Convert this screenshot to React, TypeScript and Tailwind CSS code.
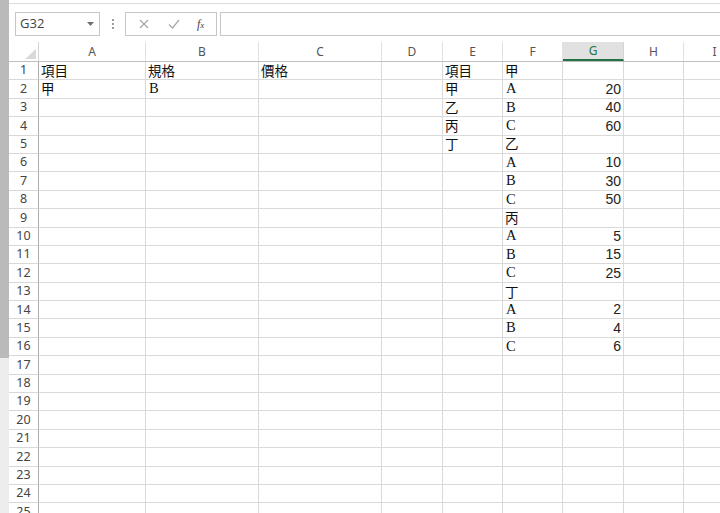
import React from "react";

const cols = [
  { l: "A", w: 107 },
  { l: "B", w: 113 },
  { l: "C", w: 123 },
  { l: "D", w: 61 },
  { l: "E", w: 60 },
  { l: "F", w: 60 },
  { l: "G", w: 61 },
  { l: "H", w: 60 },
  { l: "I", w: 62 },
];

const data: Record<number, Record<string, string>> = {
  1: { A: "項目", B: "規格", C: "價格", E: "項目", F: "甲" },
  2: { A: "甲", B: "B", E: "甲", F: "A", G: "20" },
  3: { E: "乙", F: "B", G: "40" },
  4: { E: "丙", F: "C", G: "60" },
  5: { E: "丁", F: "乙" },
  6: { F: "A", G: "10" },
  7: { F: "B", G: "30" },
  8: { F: "C", G: "50" },
  9: { F: "丙" },
  10: { F: "A", G: "5" },
  11: { F: "B", G: "15" },
  12: { F: "C", G: "25" },
  13: { F: "丁" },
  14: { F: "A", G: "2" },
  15: { F: "B", G: "4" },
  16: { F: "C", G: "6" },
};

const rows = Array.from({ length: 25 }, (_, i) => i + 1);

function CellText({ v }: { v: string }) {
  if (/^\d+$/.test(v)) {
    return (
      <span className="ml-auto pr-[2px] text-[14px] leading-none text-[#222] [font-family:'Liberation_Sans',Arial,sans-serif]">
        {v}
      </span>
    );
  }
  if (/^[A-Z]$/.test(v)) {
    return (
      <span className="pl-[3px] text-[14.5px] leading-none text-[#111] [font-family:'Liberation_Serif','Times_New_Roman',serif]">
        {v}
      </span>
    );
  }
  return (
    <span className="pl-[2px] text-[13.5px] leading-none text-[#111] [font-family:'Noto_Sans_CJK_TC','Noto_Sans_CJK_SC',sans-serif]">
      {v}
    </span>
  );
}

export default function App() {
  return (
    <div className="flex h-[513px] w-[720px] overflow-hidden bg-white [font-family:'Noto_Sans',sans-serif]">
      <div className="flex w-[9px] shrink-0 flex-col">
        <div className="h-[358px] bg-[#bababa]" />
        <div className="flex-1 bg-[#ededed]" />
      </div>
      <div className="flex min-w-0 flex-1 flex-col">
        {/* formula bar */}
        <div className="h-[42px] shrink-0">
          <div className="mt-[3px] h-px bg-[#dcdcdc]" />
          <div className="mt-[8px] flex h-[24px] items-stretch">
            <div className="ml-[6px] flex w-[85px] items-center border border-[#c6c6c6] pl-[4px] pr-[5px]">
              <span className="text-[13px] text-[#444] [font-family:'Open_Sans',sans-serif]">G32</span>
              <svg className="ml-auto" width="7" height="4" viewBox="0 0 7 4">
                <path d="M0 0h7L3.5 4z" fill="#707070" />
              </svg>
            </div>
            <div className="flex w-[25px] flex-col items-center justify-center gap-[2px]">
              <div className="h-[2px] w-[2px] bg-[#9a9a9a]" />
              <div className="h-[2px] w-[2px] bg-[#9a9a9a]" />
              <div className="h-[2px] w-[2px] bg-[#9a9a9a]" />
            </div>
            <div className="flex w-[92px] items-center border border-[#c6c6c6]">
              <svg className="ml-[13px]" width="10" height="10" viewBox="0 0 10 10">
                <path d="M1 1l8 8M9 1l-8 8" stroke="#a8a8a8" strokeWidth="1.2" />
              </svg>
              <svg className="ml-[19px]" width="12" height="10" viewBox="0 0 12 10">
                <path d="M1 5.5l3.5 3.5L11 1" stroke="#a8a8a8" strokeWidth="1.2" fill="none" />
              </svg>
              <span className="ml-[17px] text-[12px] italic text-[#444] [font-family:'Liberation_Serif',serif]">
                f<span className="text-[9px]">x</span>
              </span>
            </div>
            <div className="ml-[3px] flex-1 border border-r-0 border-[#c6c6c6]" />
          </div>
        </div>
        {/* column header */}
        <div className="flex h-[20px] shrink-0 border-b border-[#bfbfbf]">
          <div className="relative w-[30px] shrink-0 border-r border-[#d4d4d4]">
            <svg className="absolute bottom-[2px] right-[2px]" width="11" height="10" viewBox="0 0 11 10">
              <path d="M11 0v10H0z" fill="#d9d9d9" />
            </svg>
          </div>
          {cols.map((c) => (
            <div
              key={c.l}
              style={{ width: c.w }}
              className={
                c.l === "G"
                  ? "flex shrink-0 items-center justify-center border-r border-[#d4d4d4] border-b-2 border-b-[#217346] bg-[#e1e1e1] text-[12px] text-[#217346]"
                  : "flex shrink-0 items-center justify-center border-r border-[#e1e1e1] text-[12px] text-[#555]"
              }
            >
              {c.l}
            </div>
          ))}
        </div>
        {/* rows */}
        <div className="flex flex-col">
          {rows.map((r) => (
            <div key={r} className="flex h-[18.4px] shrink-0">
              <div className="flex w-[30px] shrink-0 items-center justify-center border-r border-b border-r-[#ababab] border-b-[#d8d8d8] text-[12.5px] leading-none text-[#444]">
                {r}
              </div>
              {cols.map((c) => {
                const v = data[r]?.[c.l];
                return (
                  <div
                    key={c.l}
                    style={{ width: c.w }}
                    className="flex shrink-0 items-end overflow-visible whitespace-nowrap border-r border-b border-[#dadada] pb-[2px]"
                  >
                    {v ? <CellText v={v} /> : null}
                  </div>
                );
              })}
            </div>
          ))}
        </div>
      </div>
    </div>
  );
}
